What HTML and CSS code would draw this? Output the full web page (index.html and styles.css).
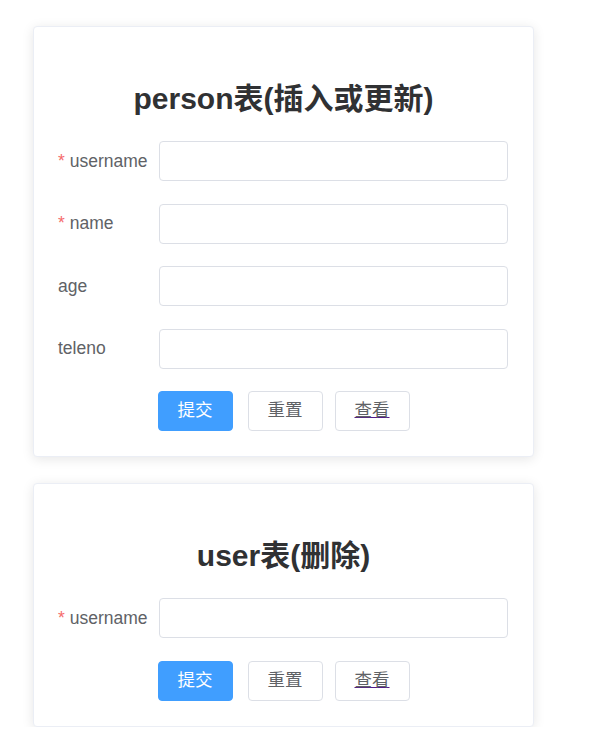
FILE: index.html
```html
<!DOCTYPE html>
<html lang="zh">
<head>
<meta charset="utf-8">
<title>表单</title>
<link rel="stylesheet" href="styles.css">
</head>
<body>
<div class="page">
  <div class="card">
    <h2 class="title">person表(插入或更新)</h2>
    <form class="form">
      <div class="item">
        <label class="label"><span class="req">*</span> username</label>
        <input class="input" type="text">
      </div>
      <div class="item">
        <label class="label"><span class="req">*</span> name</label>
        <input class="input" type="text">
      </div>
      <div class="item">
        <label class="label">age</label>
        <input class="input" type="text">
      </div>
      <div class="item">
        <label class="label">teleno</label>
        <input class="input" type="text">
      </div>
      <div class="actions">
        <button type="button" class="btn btn-primary">提交</button>
        <button type="button" class="btn btn-reset">重置</button>
        <button type="button" class="btn btn-view"><span class="link">查看</span></button>
      </div>
    </form>
  </div>

  <div class="card">
    <h2 class="title">user表(删除)</h2>
    <form class="form">
      <div class="item">
        <label class="label"><span class="req">*</span> username</label>
        <input class="input" type="text">
      </div>
      <div class="actions">
        <button type="button" class="btn btn-primary">提交</button>
        <button type="button" class="btn btn-reset">重置</button>
        <button type="button" class="btn btn-view"><span class="link">查看</span></button>
      </div>
    </form>
  </div>
</div>
</body>
</html>
```

FILE: styles.css
```css
html, body {
  margin: 0;
  padding: 0;
  background: #ffffff;
}

body {
  font-family: "Liberation Sans", "Noto Sans CJK SC", sans-serif;
  color: #606266;
}

.page {
  padding: 26px 0 0 33px;
  display: flex;
  flex-direction: column;
  gap: 26px;
}

.card {
  box-sizing: border-box;
  width: 501px;
  background: #fff;
  border: 1px solid #ebeef5;
  border-radius: 4px;
  box-shadow: 0 2px 12px 0 rgba(0, 0, 0, 0.1);
  padding: 25px;
}

.title {
  margin: 27px 0 22px;
  height: 40px;
  line-height: 40px;
  font-size: 30px;
  font-weight: bold;
  text-align: center;
  color: #303133;
}

.form {
  margin: 0;
}

.item {
  display: flex;
  align-items: center;
  height: 40px;
  margin-bottom: 22.5px;
}

.label {
  box-sizing: border-box;
  width: 100px;
  flex: none;
  margin-left: -1px;
  font-size: 17.5px;
  color: #606266;
}

.req {
  color: #f56c6c;
}

.input {
  box-sizing: border-box;
  flex: 1;
  height: 40px;
  margin-left: 1px;
  border: 1px solid #dcdfe6;
  border-radius: 4px;
  background: #fff;
  padding: 0 15px;
  outline: none;
  font-size: 16px;
}

.actions {
  display: flex;
  justify-content: center;
  height: 40px;
}

.btn {
  box-sizing: border-box;
  width: 75px;
  height: 40px;
  border-radius: 4px;
  font-family: "Liberation Sans", "Noto Sans CJK SC", sans-serif;
  font-size: 17.5px;
  line-height: 1;
  padding: 0;
  cursor: pointer;
  border: 1px solid #dcdfe6;
  background: #fff;
  color: #606266;
}

.btn-primary {
  background: #409eff;
  border-color: #409eff;
  color: #fff;
}

.btn-reset {
  margin-left: 15px;
}

.btn-view {
  margin-left: 12px;
}

.link {
  text-decoration: underline;
  text-decoration-color: #551a8b;
}
```
